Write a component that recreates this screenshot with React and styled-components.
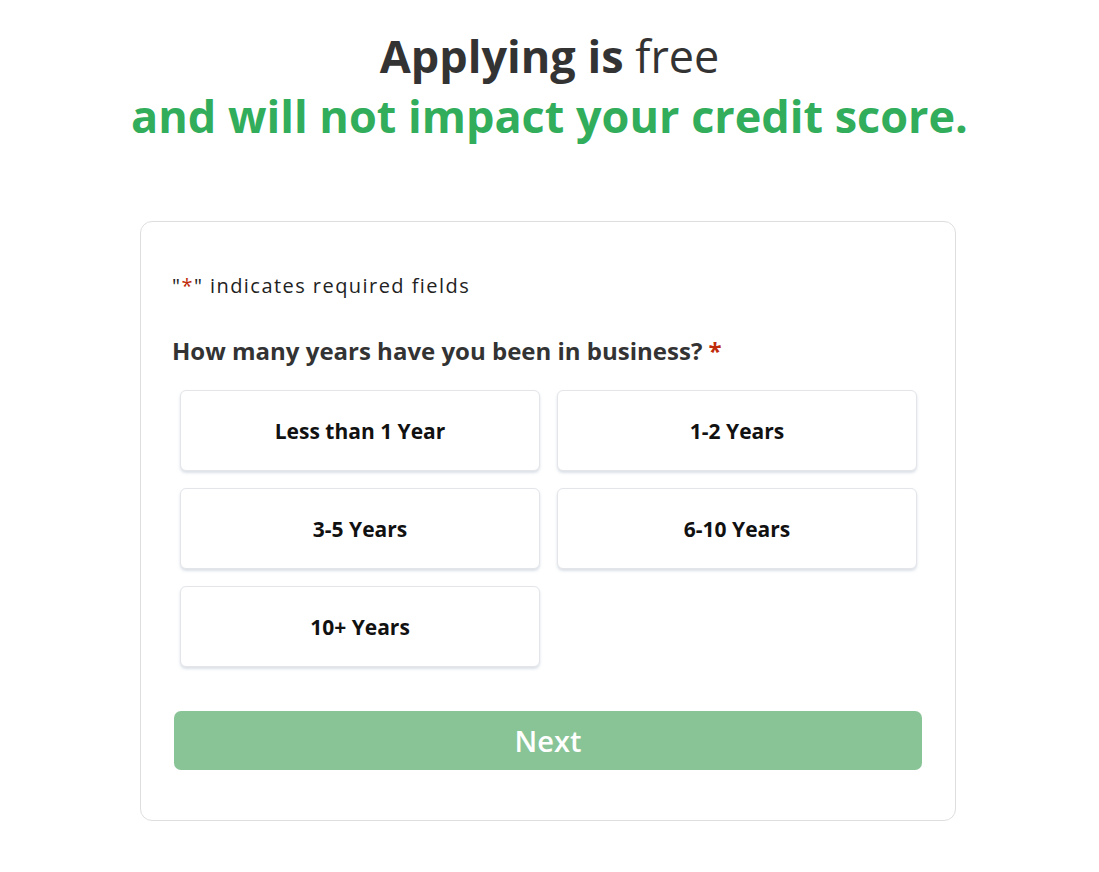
import React from "react";
import styled, { createGlobalStyle } from "styled-components";

const Global = createGlobalStyle`
  html, body { margin: 0; padding: 0; background: #fff; }
  body { font-family: "Open Sans", "Noto Sans", sans-serif; }
`;

const Page = styled.div`
  display: flex;
  flex-direction: column;
  align-items: center;
  padding-top: 26px;
`;

const Heading = styled.h1`
  margin: 0;
  text-align: center;
  font-size: 45px;
  line-height: 60px;
  font-weight: 400;
  color: #333;
`;

const Strong = styled.span`
  font-weight: 700;
`;

const Green = styled.span`
  display: block;
  color: #31ad5b;
  font-weight: 700;
`;

const Card = styled.div`
  box-sizing: border-box;
  width: 816px;
  margin-top: 75px;
  margin-left: -3px;
  border: 1px solid #dedede;
  border-radius: 12px;
  padding: 50px 33px 50px 31px;
`;

const Note = styled.p`
  margin: 0;
  font-size: 20px;
  line-height: 27px;
  font-weight: 400;
  color: #222;
  letter-spacing: 1.45px;
`;

const Red = styled.span`
  color: #c02b0a;
`;

const Question = styled.div`
  margin-top: 35px;
  font-size: 24px;
  line-height: 33px;
  font-weight: 700;
  color: #333;
`;

const Options = styled.div`
  display: grid;
  grid-template-columns: 1fr 1fr;
  column-gap: 17px;
  row-gap: 17px;
  margin: 23px 5px 0 8px;
`;

const Option = styled.button`
  height: 81px;
  background: #fff;
  border: 1px solid #e3e5e9;
  border-radius: 6px;
  box-shadow: 0 2px 3px rgba(150, 165, 185, 0.35);
  font-family: "Open Sans", sans-serif;
  font-size: 21px;
  font-weight: 700;
  color: #111;
  cursor: pointer;
`;

const Next = styled.button`
  display: block;
  width: calc(100% - 2px);
  margin-left: 2px;
  height: 59px;
  margin-top: 44px;
  background: #89c497;
  border: none;
  border-radius: 7px;
  color: #fff;
  font-family: "Open Sans", sans-serif;
  font-size: 29px;
  font-weight: 600;
`;

const options = ["Less than 1 Year", "1-2 Years", "3-5 Years", "6-10 Years", "10+ Years"];

export default function App() {
  return (
    <Page>
      <Global />
      <Heading>
        <Strong>Applying is</Strong> free
        <Green>and will not impact your credit score.</Green>
      </Heading>
      <Card>
        <Note>
          "<Red>*</Red>" indicates required fields
        </Note>
        <Question>
          How many years have you been in business? <Red>*</Red>
        </Question>
        <Options>
          {options.map((o) => (
            <Option key={o}>{o}</Option>
          ))}
        </Options>
        <Next>Next</Next>
      </Card>
    </Page>
  );
}
